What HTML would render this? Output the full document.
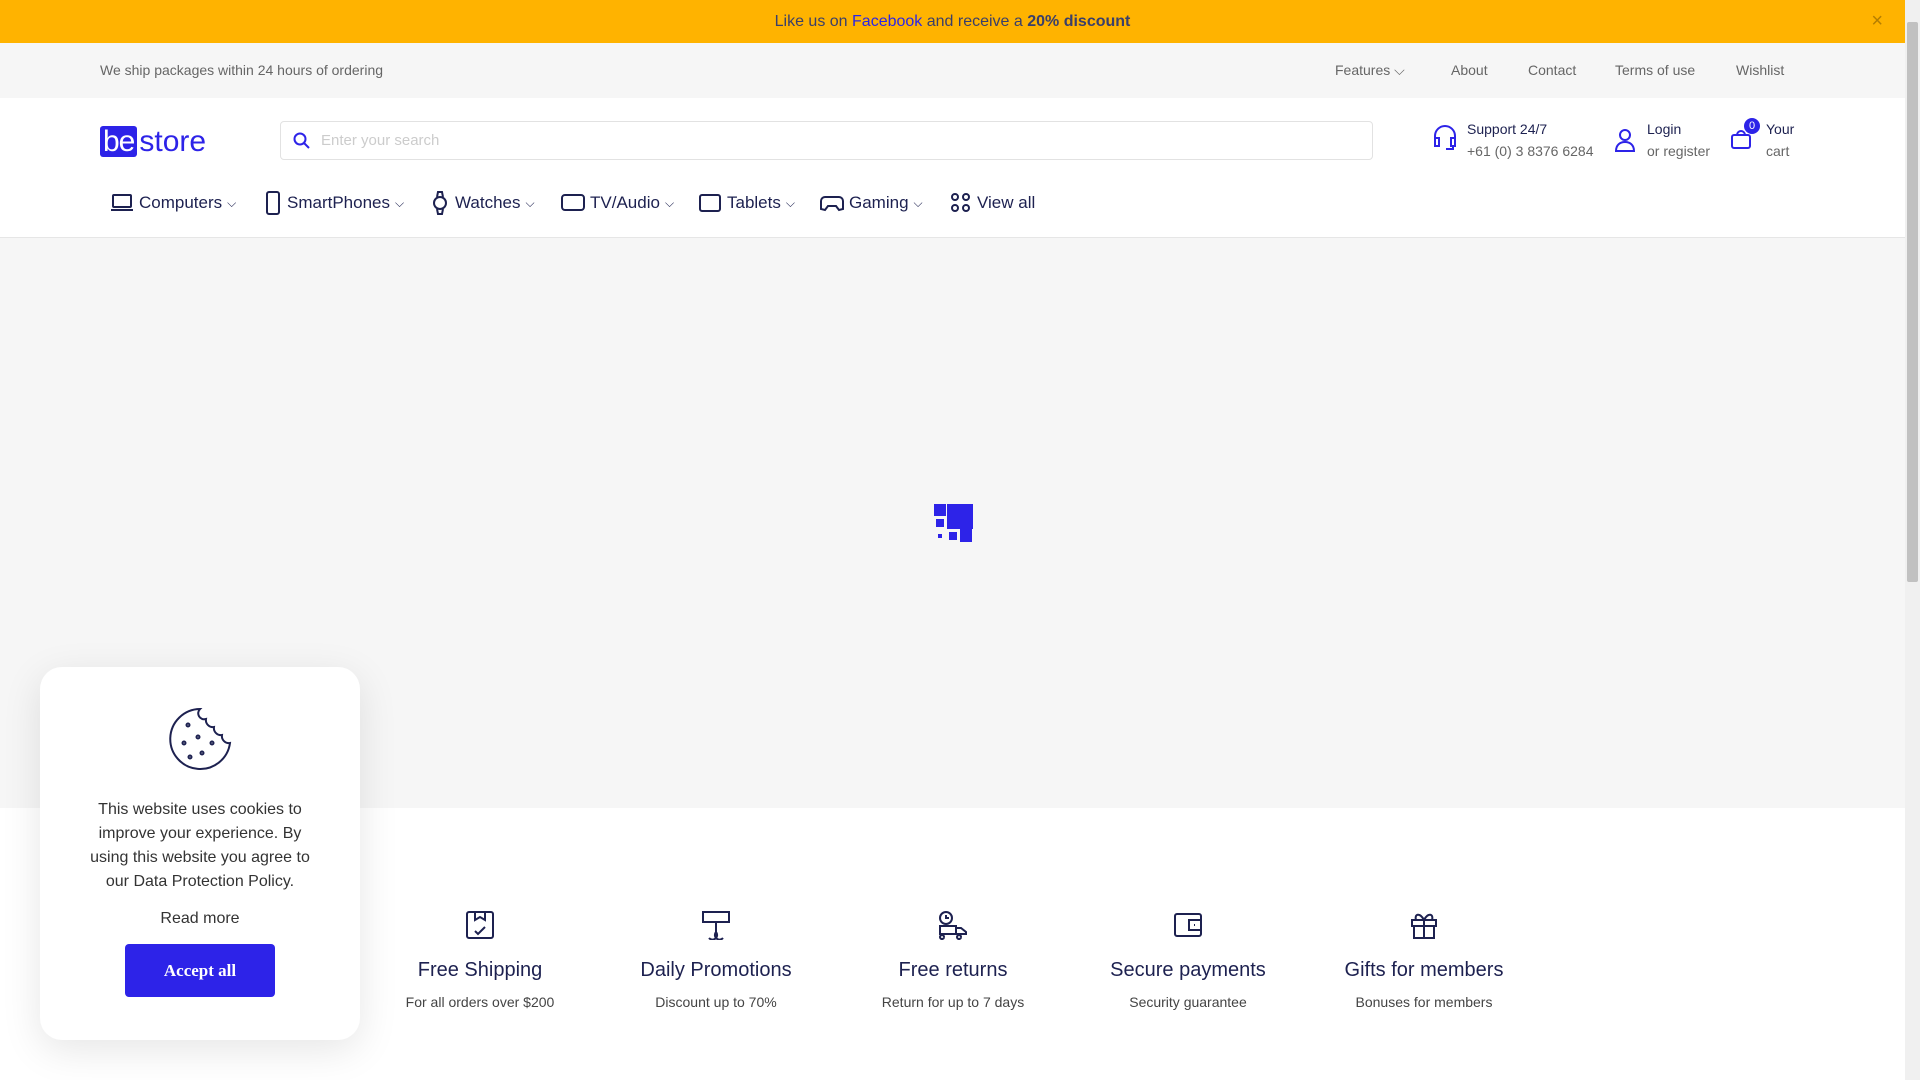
<!DOCTYPE html>
<html><head><meta charset="utf-8"><style>
*{margin:0;padding:0;box-sizing:border-box}
body{width:1920px;height:1080px;overflow:hidden;font-family:"Liberation Sans",sans-serif;background:#f6f6f6;position:relative;color:#1d2150}
.abs{position:absolute}
.top{left:0;top:0;width:1905px;height:43px;background:#ffb300;text-align:center;line-height:43px;font-size:16px;color:#3a3f6a}
.top a{color:#2b25e6;text-decoration:none}
.sec{left:0;top:43px;width:1905px;height:55px;background:#f6f6f6;font-size:14px;color:#666;line-height:55px}
.hdr{left:0;top:98px;width:1905px;height:140px;background:#fff;border-bottom:1px solid #e6e6e6}
.nav{font-size:17px;color:#1d2150;display:flex;align-items:center;gap:5px;top:190px;height:26px}
.feat{top:910px;width:240px;text-align:center}
.feat h3{font-weight:normal;font-size:20px;margin-top:14px;color:#1d2150}
.feat p{font-size:14px;color:#444;margin-top:12px}
svg{stroke:#1d2150;fill:none;stroke-width:2}
</style></head><body>
<div class="abs top">Like us on <a>Facebook</a> and receive a <b>20% discount</b><span class="abs" style="right:22px;top:0;color:#b57e00;font-size:20px">×</span></div>
<div class="abs sec"><span class="abs" style="left:100px">We ship packages within 24 hours of ordering</span>
<span class="abs" style="left:1335px">Features ⌵</span><span class="abs" style="left:1451px">About</span><span class="abs" style="left:1528px">Contact</span><span class="abs" style="left:1615px">Terms of use</span><span class="abs" style="left:1736px">Wishlist</span></div>
<div class="abs hdr">
<div class="abs" style="left:100px;top:28px;height:31px;display:flex;align-items:center"><span style="background:#2d23e8;color:#fff;font-size:30px;line-height:31px;padding:0 3px;border-radius:3px;letter-spacing:-1px">be</span><span style="color:#2d23e8;font-size:30px;margin-left:2px">store</span></div>
<div class="abs" style="left:280px;top:23px;width:1093px;height:39px;border:1px solid #e2e2e2;border-radius:4px;font-size:15px;color:#ccc;line-height:37px;padding-left:40px"><svg class="abs" style="left:12px;top:10px;stroke:#2d23e8" width="18" height="18"><circle cx="7" cy="7" r="5.5"/><path d="M11 11l5 5"/></svg>Enter your search</div>
<svg class="abs" style="left:1432px;top:26px;stroke:#2d23e8" width="26" height="30"><path d="M3 16v-4a10 10 0 0 1 20 0v4M3 14h4v8H3zM19 14h4v8h-4zM21 22v3h-7"/></svg>
<div class="abs" style="left:1467px;top:20px;font-size:14px;line-height:22px"><div style="color:#1d2150">Support 24/7</div><div style="color:#666">+61 (0) 3 8376 6284</div></div>
<svg class="abs" style="left:1614px;top:30px;stroke:#2d23e8" width="22" height="24"><circle cx="11" cy="7" r="5"/><path d="M2 23c0-6 4-9 9-9s9 3 9 9z"/></svg>
<div class="abs" style="left:1647px;top:20px;font-size:14px;line-height:22px"><div>Login</div><div style="color:#666">or register</div></div>
<svg class="abs" style="left:1730px;top:30px;stroke:#2d23e8" width="22" height="22"><rect x="2" y="7" width="18" height="13" rx="2"/><path d="M7 7a4 4 0 0 1 8 0"/></svg>
<div class="abs" style="left:1744px;top:20px;width:16px;height:16px;border-radius:50%;background:#2d23e8;color:#fff;font-size:11px;text-align:center;line-height:16px">0</div>
<div class="abs" style="left:1766px;top:20px;font-size:14px;line-height:22px"><div>Your</div><div style="color:#666">cart</div></div>
</div>
<div class="abs nav" style="left:110px"><svg width="24" height="20"><rect x="3" y="2" width="18" height="12" rx="1"/><path d="M1 17h22"/></svg> Computers <span style="font-size:12px">⌵</span></div>
<div class="abs nav" style="left:264px"><svg width="18" height="24"><rect x="3" y="1" width="12" height="22" rx="2"/></svg> SmartPhones <span style="font-size:12px">⌵</span></div>
<div class="abs nav" style="left:430px"><svg width="20" height="26"><circle cx="10" cy="13" r="6"/><path d="M7 7l1-5h4l1 5M7 19l1 5h4l1-5"/></svg> Watches <span style="font-size:12px">⌵</span></div>
<div class="abs nav" style="left:561px"><svg width="24" height="20"><rect x="1" y="2" width="22" height="15" rx="3"/></svg> TV/Audio <span style="font-size:12px">⌵</span></div>
<div class="abs nav" style="left:698px"><svg width="24" height="20"><rect x="2" y="2" width="20" height="16" rx="2"/></svg> Tablets <span style="font-size:12px">⌵</span></div>
<div class="abs nav" style="left:820px"><svg width="24" height="20"><path d="M5 4h14a4 4 0 0 1 4 4v8l-4 1-3-4H8l-3 4-4-1V8a4 4 0 0 1 4-4z"/></svg> Gaming <span style="font-size:12px">⌵</span></div>
<div class="abs nav" style="left:950px"><svg width="22" height="22"><circle cx="5" cy="5" r="3"/><circle cx="16" cy="5" r="3"/><circle cx="5" cy="16" r="3"/><circle cx="16" cy="16" r="3"/></svg> View all</div>
<div class="abs" style="left:934px;top:504px;width:12px;height:12px;background:#2d23e8"></div>
<div class="abs" style="left:947px;top:504px;width:26px;height:25px;background:#2d23e8"></div>
<div class="abs" style="left:960px;top:517px;width:12px;height:25px;background:#2d23e8"></div>
<div class="abs" style="left:936px;top:519px;width:8px;height:8px;background:#2d23e8"></div>
<div class="abs" style="left:938px;top:534px;width:4px;height:4px;background:#2d23e8"></div>
<div class="abs" style="left:949px;top:532px;width:8px;height:8px;background:#2d23e8"></div>
<div class="abs" style="left:0;top:808px;width:1905px;height:272px;background:#fff"></div>
<div class="abs feat" style="left:360px"><svg width="30" height="30"><rect x="2" y="2" width="26" height="26" rx="2"/><path d="M10 2v8l5-3 5 3V2M10 21l3 3 7-7"/></svg><h3>Free Shipping</h3><p>For all orders over $200</p></div>
<div class="abs feat" style="left:596px"><svg width="30" height="30"><path d="M2 2h26v10H2zM15 12v16M8 28a4 4 0 0 0 7-6M22 28a4 4 0 0 1-7-6"/></svg><h3>Daily Promotions</h3><p>Discount up to 70%</p></div>
<div class="abs feat" style="left:833px"><svg width="30" height="30"><circle cx="8" cy="8" r="6"/><path d="M8 5v3h3M2 16h16v8H2zM18 18h5l5 4v2H18M6 27a2 2 0 1 0 0 .1M23 27a2 2 0 1 0 0 .1"/></svg><h3>Free returns</h3><p>Return for up to 7 days</p></div>
<div class="abs feat" style="left:1068px"><svg width="30" height="30"><rect x="2" y="4" width="26" height="22" rx="2"/><path d="M28 10H16v10h12M21 15h1"/></svg><h3>Secure payments</h3><p>Security guarantee</p></div>
<div class="abs feat" style="left:1304px"><svg width="30" height="30"><path d="M3 10h24v6H3zM5 16h20v12H5zM15 10v18M15 10c-4-8-10-6-8 0M15 10c4-8 10-6 8 0"/></svg><h3>Gifts for members</h3><p>Bonuses for members</p></div>
<div class="abs" style="left:40px;top:667px;width:320px;height:373px;background:#fff;border-radius:22px;box-shadow:0 10px 40px rgba(0,0,0,.1);text-align:center">
<svg style="margin-top:40px;stroke-width:2" width="64" height="64"><path d="M32 2a30 30 0 1 0 30 34 7 7 0 0 1-8-8 7 7 0 0 1-8-8 7 7 0 0 1-8-8 6 6 0 0 1-6-10z"/><circle cx="20" cy="18" r="1.5"/><circle cx="16" cy="36" r="1.5"/><circle cx="30" cy="30" r="1.5"/><circle cx="34" cy="46" r="1.5"/><circle cx="22" cy="50" r="1.5"/><circle cx="44" cy="36" r="1.5"/></svg>
<p style="font-size:16px;line-height:24px;color:#333;margin:22px 42px 0">This website uses cookies to improve your experience. By using this website you agree to our Data Protection Policy.</p>
<p style="font-size:16px;color:#333;margin-top:16px">Read more</p>
<div style="margin:16px auto 0;width:150px;height:53px;background:#2d23e8;border-radius:4px;color:#fff;font-family:'Liberation Serif',serif;font-weight:bold;font-size:17px;line-height:53px">Accept all</div>
</div>
<div class="abs" style="left:1905px;top:0;width:15px;height:1080px;background:#f0f0f0"><div style="margin:22px 2px;width:11px;height:560px;background:#c1c1c1;border-radius:2px"></div></div>
</body></html>
